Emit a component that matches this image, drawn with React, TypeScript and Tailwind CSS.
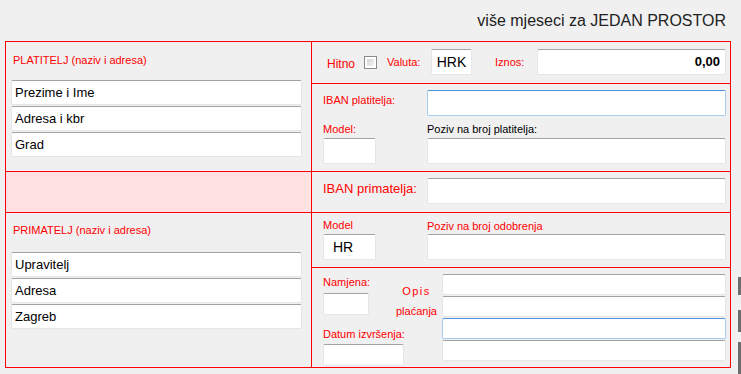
import type { ReactNode } from 'react';

const red = 'text-[#ff0000]';
const line = 'border-[rgb(255,0,0)]';
const label = 'text-[11px] leading-[14px] text-[#ff0000]';

function Field({ className = '', focus = false, children }: { className?: string; focus?: boolean; children?: ReactNode }) {
  return (
    <div
      className={
        'flex items-center bg-white rounded-[2px] border ' +
        (focus
          ? 'border-[#a9cdf0] border-t-[#4d93dc] '
          : 'border-[#e6e6e6] border-t-[#a3a3a3] ') +
        className
      }
    >
      {children}
    </div>
  );
}

function Stack({ lines }: { lines: string[] }) {
  return (
    <div className="flex flex-col gap-[1px] ml-[5px] w-[291px]">
      {lines.map((l) => (
        <Field key={l} className="h-[25px] pl-[3px] text-[13px] text-black">
          {l}
        </Field>
      ))}
    </div>
  );
}

export default function App() {
  return (
    <div className="w-[741px] h-[374px] overflow-hidden bg-[#f0f0f0] font-['Liberation_Sans',Arial,sans-serif]">
      <div className="pt-[12px] pr-[15px] text-right text-[16px] leading-[18px] text-[#222]">
        više mjeseci za JEDAN PROSTOR
      </div>

      <div className="flex mt-[11px]">
        <div className={'ml-[5px] w-[727px] h-[327px] border grid grid-cols-[306px_1fr] grid-rows-[42px_88px_41px_55px_1fr] ' + line + ' ' + red}>
          {/* PLATITELJ */}
          <div className={'row-span-2 border-r border-b pt-[11px] ' + line}>
            <div className={label + ' pl-[7px]'}>PLATITELJ (naziv i adresa)</div>
            <div className="mt-[13px]">
              <Stack lines={['Prezime i Ime', 'Adresa i kbr', 'Grad']} />
            </div>
          </div>

          {/* Hitno / Valuta / Iznos */}
          <div className={'border-b flex items-center pl-[15px] pb-[1px] ' + line}>
            <span className="w-[37px] mt-[3px] text-[12px] leading-[14px] text-[#ff0000]">Hitno</span>
            <div className="w-[13px] h-[13px] border border-[#8a8a8a] p-[2px] bg-white">
              <div className="w-full h-full bg-gradient-to-br from-[#d4d4d4] to-[#f4f4f4]" />
            </div>
            <span className={label + ' w-[44px] ml-[10px] mt-[-1px]'}>Valuta:</span>
            <Field className="w-[41px] h-[26px] justify-center text-[14px] text-black">HRK</Field>
            <span className={label + ' w-[42px] ml-[23px] mt-[-1px]'}>Iznos:</span>
            <Field className="w-[189px] h-[26px] justify-end pr-[5px] text-[13px] font-bold text-black">0,00</Field>
          </div>

          {/* IBAN platitelja / Model / Poziv */}
          <div className={'border-b pt-[6px] pl-[11px] ' + line}>
            <div className="flex">
              <span className={label + ' w-[104px] mt-[3px]'}>IBAN platitelja:</span>
              <Field focus className="w-[299px] h-[26px]" />
            </div>
            <div className="flex mt-[6px]">
              <div className="w-[104px]">
                <div className={label}>Model:</div>
                <Field className="mt-[2px] w-[53px] h-[26px]" />
              </div>
              <div>
                <div className="text-[11px] leading-[14px] text-black">Poziv na broj platitelja:</div>
                <Field className="mt-[2px] w-[299px] h-[26px]" />
              </div>
            </div>
          </div>

          {/* pink strip */}
          <div className={'border-r border-b bg-[#ffe1e1] ' + line} />

          {/* IBAN primatelja */}
          <div className={'border-b pt-[6px] pl-[11px] flex ' + line}>
            <span className="w-[104px] mt-[3px] text-[13px] leading-[16px] text-[#ff0000]">IBAN primatelja:</span>
            <Field className="w-[299px] h-[26px]" />
          </div>

          {/* PRIMATELJ */}
          <div className={'row-span-2 border-r pt-[10px] ' + line}>
            <div className={label + ' pl-[7px]'}>PRIMATELJ (naziv i adresa)</div>
            <div className="mt-[15px]">
              <Stack lines={['Upravitelj', 'Adresa', 'Zagreb']} />
            </div>
          </div>

          {/* Model / Poziv na broj odobrenja */}
          <div className={'border-b pt-[5px] pl-[11px] flex ' + line}>
            <div className="w-[104px]">
              <div className={label}>Model</div>
              <Field className="mt-[2px] w-[53px] h-[26px] pl-[9px] text-[14px] text-black">HR</Field>
            </div>
            <div>
              <div className={label + ' mt-[1px]'}>Poziv na broj odobrenja</div>
              <Field className="mt-[1px] w-[299px] h-[26px]" />
            </div>
          </div>

          {/* Namjena / Opis plaćanja / Datum */}
          <div className="pt-[6px] pl-[11px] flex">
            <div className="w-[119px]">
              <div className="flex">
                <div className="w-[69px]">
                  <div className={label + ' mt-[1px]'}>Namjena:</div>
                  <Field className="mt-[4px] w-[46px] h-[22px]" />
                </div>
                <div className="w-[50px] pt-[7px] pr-[1px] text-center text-[11px] leading-[20px] text-[#ff0000]">
                  <div className="tracking-[1.5px]">Opis</div>
                  <div>plaćanja</div>
                </div>
              </div>
              <div className={label + ' mt-[6px]'}>Datum izvršenja:</div>
              <Field className="mt-[3px] w-[81px] h-[22px]" />
            </div>
            <div className="flex flex-col gap-[1px]">
              <Field className="w-[284px] h-[21px]" />
              <Field className="w-[284px] h-[21px]" />
              <Field focus className="w-[284px] h-[21px]" />
              <Field className="w-[284px] h-[21px]" />
            </div>
          </div>
        </div>

        <div className="ml-[7px] pt-[236px] flex flex-col">
          <div className="w-[3px] h-[18px] bg-[#6d6d6d]" />
          <div className="w-[3px] h-[22px] bg-[#6d6d6d] mt-[15px]" />
          <div className="w-[3px] h-[40px] bg-[#6d6d6d] mt-[10px]" />
        </div>
      </div>
    </div>
  );
}
